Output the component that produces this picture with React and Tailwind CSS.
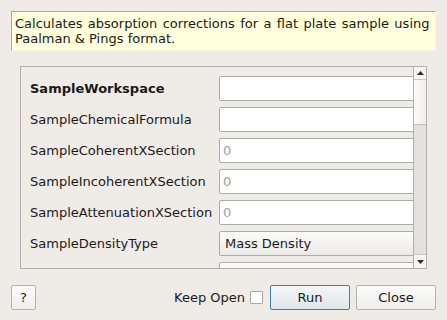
import { useState } from "react";

const rows = [
  { label: "SampleWorkspace", bold: true, kind: "text", value: "" },
  { label: "SampleChemicalFormula", kind: "text", value: "" },
  { label: "SampleCoherentXSection", kind: "text", placeholder: "0" },
  { label: "SampleIncoherentXSection", kind: "text", placeholder: "0" },
  { label: "SampleAttenuationXSection", kind: "text", placeholder: "0" },
  { label: "SampleDensityType", kind: "combo", value: "Mass Density" },
  { label: "", kind: "combo", value: "" },
];

function Row({ row }) {
  return (
    <div className="flex h-[25px] items-center">
      <div
        className={
          "w-[198px] shrink-0 pl-[9px] text-[#1a1a1a] " +
          (row.bold ? "font-bold" : "")
        }
      >
        {row.label}
      </div>
      {row.kind === "combo" ? (
        <div className="flex h-[25px] w-[220px] shrink-0 items-center rounded-[2px] border border-[#ababab] bg-gradient-to-b from-[#fbfbfa] to-[#ecebe9] pl-[5px] text-[#1a1a1a]">
          {row.value}
        </div>
      ) : (
        <div className="flex h-[25px] w-[220px] shrink-0 items-center rounded-[2px] border border-[#ababab] bg-white pl-[3px] text-[#a0a0a0]">
          {row.placeholder}
        </div>
      )}
    </div>
  );
}

export default function App() {
  const [keepOpen, setKeepOpen] = useState(false);

  return (
    <div className="h-[320px] w-[447px] overflow-hidden bg-[#efebe7] font-['DejaVu_Sans',sans-serif] text-[13px] text-[#1a1a1a]">
      <div className="mx-[11px] mt-[11px] h-[40px] border border-t-[#a8a8a8] border-l-[#a8a8a8] border-r-[#f4f4f0] border-b-[#f4f4f0] bg-[#ffffdc] px-[3px] pt-[4px] leading-[15px]">
        <div className="whitespace-nowrap [word-spacing:1.25px]">
          Calculates absorption corrections for a flat plate sample using
        </div>
        <div>Paalman &amp; Pings format.</div>
      </div>

      <div className="ml-[20px] mt-[15px] flex h-[203px] w-[407px] border border-[#b2b0ad]">
        <div className="flex flex-1 flex-col gap-[6px] overflow-hidden pt-[9px]">
          {rows.map((r, i) => (
            <Row key={i} row={r} />
          ))}
        </div>
        <div className="flex w-[13px] flex-col border-l border-[#b2b0ad] bg-[#e2e1de]">
          <div className="flex h-[13px] items-center justify-center border-b border-[#c8c6c3] bg-[#f6f5f4]">
            <svg width="7" height="4" viewBox="0 0 7 4">
              <path d="M0 4 L3.5 0 L7 4 Z" fill="#2a2a2a" />
            </svg>
          </div>
          <div className="h-[45px] border-b border-[#c2c0bd] bg-gradient-to-r from-[#fbfbfa] to-[#f0efed]" />
          <div className="flex-1" />
          <div className="flex h-[14px] items-center justify-center border-t border-[#c8c6c3] bg-[#f6f5f4]">
            <svg width="7" height="4" viewBox="0 0 7 4">
              <path d="M0 0 L7 0 L3.5 4 Z" fill="#2a2a2a" />
            </svg>
          </div>
        </div>
      </div>

      <div className="mt-[16px] flex h-[25px] items-center px-[11px]">
        <button className="h-[25px] w-[25px] rounded-[2px] border border-[#b4b2af] bg-gradient-to-b from-[#fbfbfa] to-[#efeeec] text-[13px]">
          ?
        </button>
        <div className="flex-1" />
        <span className="mr-[5px]">Keep Open</span>
        <button
          onClick={() => setKeepOpen(!keepOpen)}
          className="mr-[7px] h-[13px] w-[13px] rounded-[1px] border border-[#a8a8a8] bg-white"
        />
        <button className="mr-[6px] h-[25px] w-[80px] rounded-[2px] border border-[#3b7fb6] bg-gradient-to-b from-[#f4f6f8] to-[#e1e6ea]">
          Run
        </button>
        <button className="h-[25px] w-[80px] rounded-[2px] border border-[#b4b2af] bg-gradient-to-b from-[#fbfbfa] to-[#efeeec]">
          Close
        </button>
      </div>
    </div>
  );
}
